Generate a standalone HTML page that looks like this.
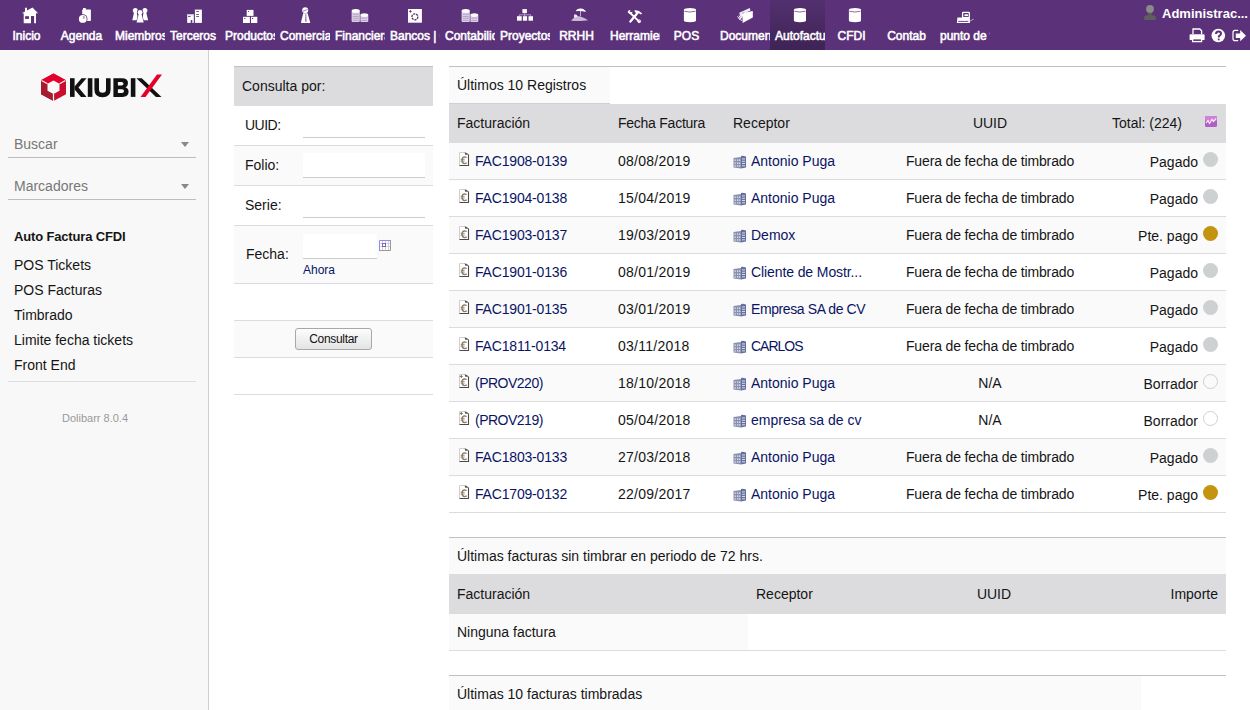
<!DOCTYPE html>
<html><head><meta charset="utf-8"><style>
*{box-sizing:border-box}
html,body{margin:0;padding:0;width:1250px;height:710px;overflow:hidden;background:#fff;font-family:"Liberation Sans",sans-serif;color:#151515}
.abs{position:absolute}
#top{position:absolute;left:0;top:0;width:1250px;height:50px;background:#5b3179}
.tab{position:absolute;top:0;width:55px;height:50px;overflow:hidden}
.tab.act{background:linear-gradient(#53306f,#3e2356)}
.tab svg{position:absolute;left:0;top:0}
.tab span{position:absolute;left:5px;top:29px;width:43px;text-align:center;color:#fff;font-size:12px;white-space:nowrap;line-height:14px;-webkit-text-stroke:0.55px #fff}
#user{position:absolute;left:1144px;top:4px;white-space:nowrap}
#user svg{position:absolute;left:0;top:1px}
#user b{position:absolute;left:18px;top:2px;color:#fff;font-size:13px;font-weight:700}
#side{position:absolute;left:0;top:50px;width:209px;height:660px;background:#f8f8f8;border-right:1px solid #cfcfcf}
.sel{position:absolute;left:8px;width:188px;border-bottom:1px solid #bdbdbd;height:30px}
.sel span{position:absolute;left:6px;font-size:14px;color:#777;line-height:16px}
.sel i{position:absolute;right:7px;width:0;height:0;border-left:4px solid transparent;border-right:4px solid transparent;border-top:5px solid #888}
.menu{position:absolute;left:14px;font-size:14px;color:#151515;white-space:nowrap;line-height:16px}
.t{position:absolute;white-space:nowrap;font-size:14px;line-height:16px}
.hl{position:absolute;height:1px}
a{color:#0a1464;text-decoration:none}

</style></head><body>
<div id="top"><div class="tab" style="left:0px"><svg width="55" height="30" viewBox="0 0 55 30"><path d="M21.7 13.3 L25 11.6 L25 7.8 L27 7.8 L27 10.5 L32.5 7.6 L38.1 13.3 L36 13.3 L36 23.2 L34.1 23.2 L34.1 16.1 L31 16.1 L31 23.2 L23.7 23.2 L23.7 13.3 Z" fill="#fff"/><rect x="25.1" y="16.2" width="3.9" height="2.7" fill="#5b3179"/></svg><span>Inicio</span></div><div class="tab" style="left:55px"><svg width="55" height="30" viewBox="0 0 55 30"><rect x="27.2" y="9.6" width="8.7" height="11.3" rx="0.6" fill="#fff"/><rect x="28" y="8" width="2.8" height="2" fill="#fff"/><circle cx="27.8" cy="18.9" r="4.7" fill="#5b3179"/><circle cx="27.8" cy="18.9" r="3.9" fill="#fff"/><path d="M27.8 18.9 L27.8 15.8 A3.1 3.1 0 0 1 30.6 18 Z" fill="#b8a8c8"/></svg><span>Agenda</span></div><div class="tab" style="left:110px"><svg width="55" height="30" viewBox="0 0 55 30"><circle cx="25.3" cy="10.6" r="2.5" fill="#fff"/><path d="M24.1 12 L26.6 12 L28.2 20.3 L22.3 20.3 Z" fill="#fff"/><circle cx="34.9" cy="10.6" r="2.5" fill="#fff"/><path d="M33.6 12 L36.1 12 L38.1 20.3 L32.1 20.3 Z" fill="#fff"/><circle cx="30.1" cy="12.3" r="3.1" fill="#5b3179"/><path d="M28.2 14.5 L32 14.5 L34.6 23.2 L25.8 23.2 Z" fill="#5b3179"/><circle cx="30.1" cy="12.3" r="2.4" fill="#fff"/><path d="M28.7 14 L31.5 14 L33.7 22.6 L26.6 22.6 Z" fill="#fff"/></svg><span>Miembros</span></div><div class="tab" style="left:165px"><svg width="55" height="30" viewBox="0 0 55 30"><rect x="29.9" y="9.6" width="7" height="13.3" fill="#fff"/><rect x="31.2" y="11.2" width="2.8" height="0.8" fill="#5b3179"/><rect x="31.2" y="14" width="2.8" height="0.8" fill="#5b3179"/><rect x="31.2" y="16" width="2.8" height="0.8" fill="#5b3179"/><rect x="22.2" y="14.1" width="6.6" height="8.8" fill="#fff"/><rect x="22.2" y="14.1" width="6.6" height="1.2" fill="#c9bcd6"/><rect x="23" y="16.1" width="2.7" height="0.8" fill="#5b3179"/><rect x="25.7" y="20.1" width="1.6" height="2.8" fill="#5b3179"/></svg><span>Terceros</span></div><div class="tab" style="left:220px"><svg width="55" height="30" viewBox="0 0 55 30"><rect x="26.7" y="9.9" width="6.8" height="6" fill="#fff"/><rect x="23" y="16.8" width="6.9" height="6.2" fill="#fff"/><rect x="31" y="16.8" width="6.3" height="6.2" fill="#fff"/><circle cx="28.5" cy="11.5" r="0.6" fill="#5b3179"/><circle cx="24.8" cy="18.4" r="0.6" fill="#5b3179"/><circle cx="32.6" cy="18.4" r="0.6" fill="#5b3179"/></svg><span>Productos</span></div><div class="tab" style="left:275px"><svg width="55" height="30" viewBox="0 0 55 30"><circle cx="30.2" cy="10.2" r="3" fill="#fff"/><path d="M28 11.2 L32.5 9.5" stroke="#5b3179" stroke-width="0.6"/><path d="M28.2 13.3 L32.6 13.3 L35.2 22.4 Q35.2 22.9 34.7 22.9 L26.5 22.9 Q26 22.9 26 22.4 Z" fill="#fff"/><path d="M30.6 14 L31.2 14 L31.4 21.8 L30.4 21.8 Z" fill="#5b3179"/></svg><span>Comercial</span></div><div class="tab" style="left:330px"><svg width="55" height="30" viewBox="0 0 55 30"><rect x="21.6" y="10.9" width="8.2" height="11.1" rx="1" fill="#ddd3e6"/><ellipse cx="25.7" cy="10.9" rx="4.1" ry="1.8" fill="#fff"/><path d="M22.6 14.2 H28.8 M22.6 16.4 H28.8 M22.6 18.2 H28.8 M22.6 20.3 H28.8" stroke="#a08cb8" stroke-width="0.7"/><rect x="30.4" y="15.1" width="7.9" height="6.9" rx="1" fill="#ddd3e6"/><ellipse cx="34.35" cy="15.1" rx="3.95" ry="1.8" fill="#fff"/><path d="M31.4 18 H37.3 M31.4 20.4 H37.3" stroke="#a08cb8" stroke-width="0.7"/></svg><span>Financiera</span></div><div class="tab" style="left:385px"><svg width="55" height="30" viewBox="0 0 55 30"><rect x="23" y="9" width="13.9" height="13.7" fill="#fff"/><circle cx="29.9" cy="16.85" r="3" fill="none" stroke="#5b3179" stroke-width="1.3" stroke-dasharray="2.2 0.8"/><path d="M24.2 11.4 H26.6 M25.4 10.2 V12.6" stroke="#5b3179" stroke-width="1"/></svg><span>Bancos | Caja</span></div><div class="tab" style="left:440px"><svg width="55" height="30" viewBox="0 0 55 30"><rect x="21.6" y="10.9" width="8.2" height="11.1" rx="1" fill="#ddd3e6"/><ellipse cx="25.7" cy="10.9" rx="4.1" ry="1.8" fill="#fff"/><path d="M22.6 14.2 H28.8 M22.6 16.4 H28.8 M22.6 18.2 H28.8 M22.6 20.3 H28.8" stroke="#a08cb8" stroke-width="0.7"/><rect x="30.4" y="15.1" width="7.9" height="6.9" rx="1" fill="#ddd3e6"/><ellipse cx="34.35" cy="15.1" rx="3.95" ry="1.8" fill="#fff"/><path d="M31.4 18 H37.3 M31.4 20.4 H37.3" stroke="#a08cb8" stroke-width="0.7"/></svg><span>Contabilidad</span></div><div class="tab" style="left:495px"><svg width="55" height="30" viewBox="0 0 55 30"><rect x="27.4" y="9.1" width="4.5" height="4" fill="#fff"/><rect x="22" y="16.2" width="4.7" height="4.5" fill="#fff"/><rect x="27.9" y="16.2" width="4.2" height="4.5" fill="#fff"/><rect x="33.5" y="16.2" width="4.5" height="4.5" fill="#fff"/><path d="M29.7 13.1 V16.2 M24.3 16.2 V14.8 H35.7 V16.2" stroke="#c0b0d0" stroke-width="0.8" fill="none"/></svg><span>Proyectos</span></div><div class="tab" style="left:550px"><svg width="55" height="30" viewBox="0 0 55 30"><path d="M25.7 11.2 Q27 8.2 30.8 8.5 Q34.6 8.8 36 12 Q32 10.8 25.7 11.2 Z" fill="#fff"/><rect x="30.2" y="11" width="0.8" height="5.4" fill="#d8cce2"/><path d="M21 20.5 Q22.5 18.5 24 18 Q23.5 15.5 24.5 14.6 Q26.5 14.5 27.5 16 Q32 16.5 38.1 20.3 Q33 21.2 28 21 Q24 21 21 20.5 Z" fill="#c9bbd8"/><path d="M24.5 14.6 Q26.5 14.5 27.5 16 Q27 17.5 24.2 17.6 Q23.6 15.5 24.5 14.6 Z" fill="#eee8f3"/></svg><span>RRHH</span></div><div class="tab" style="left:605px"><svg width="55" height="30" viewBox="0 0 55 30"><path d="M25.4 21.6 L32.5 13" stroke="#fff" stroke-width="2.3" stroke-linecap="round"/><path d="M29.1 10.5 Q33 9.3 37.2 13.4 L35.9 14.4 Q33 12.5 31 13.2 Z" fill="#fff"/><path d="M25 12.8 L34.2 21.6" stroke="#fff" stroke-width="1.9" stroke-linecap="round"/><path d="M22.6 12.2 Q22.8 9.8 25.6 9.9 L24.6 11.4 L25.8 12.6 L27.4 11.6 Q27.5 14.2 25 14.3 Z" fill="#fff"/><circle cx="34.2" cy="21.3" r="1.4" fill="none" stroke="#fff" stroke-width="1"/></svg><span>Herramientas</span></div><div class="tab" style="left:660px"><svg width="55" height="30" viewBox="0 0 55 30"><path d="M23.9 9.7 L23.9 20.6 Q23.9 22.3 29.95 22.3 Q36 22.3 36 20.6 L36 9.7 Z" fill="#fff"/><ellipse cx="29.95" cy="9.7" rx="6.05" ry="1.7" fill="#fff"/><path d="M24.3 11.2 Q29.95 12.9 35.6 11.2" stroke="#5b3179" stroke-width="0.7" fill="none"/></svg><span>POS</span></div><div class="tab" style="left:715px"><svg width="55" height="30" viewBox="0 0 55 30"><path d="M24.2 12.7 L34.7 8 L35.5 10.5 L29.5 13.5 L26 19 Z" fill="#fff" opacity="0.9"/><path d="M27.3 13.3 L37.8 11.1 L37.8 17.6 L27.6 22.9 Z" fill="#fff"/><path d="M22.6 16.4 L24.5 19.5 L26 17 M24 15.5 L26.5 21" stroke="#fff" stroke-width="0.9" fill="none"/><path d="M27.3 13.3 L29.3 12.7" stroke="#5b3179" stroke-width="0.5"/></svg><span>Documentos</span></div><div class="tab act" style="left:770px"><svg width="55" height="30" viewBox="0 0 55 30"><path d="M23.9 9.7 L23.9 20.6 Q23.9 22.3 29.95 22.3 Q36 22.3 36 20.6 L36 9.7 Z" fill="#fff"/><ellipse cx="29.95" cy="9.7" rx="6.05" ry="1.7" fill="#fff"/><path d="M24.3 11.2 Q29.95 12.9 35.6 11.2" stroke="#5b3179" stroke-width="0.7" fill="none"/></svg><span>Autofactura</span></div><div class="tab" style="left:825px"><svg width="55" height="30" viewBox="0 0 55 30"><path d="M23.9 9.7 L23.9 20.6 Q23.9 22.3 29.95 22.3 Q36 22.3 36 20.6 L36 9.7 Z" fill="#fff"/><ellipse cx="29.95" cy="9.7" rx="6.05" ry="1.7" fill="#fff"/><path d="M24.3 11.2 Q29.95 12.9 35.6 11.2" stroke="#5b3179" stroke-width="0.7" fill="none"/></svg><span>CFDI</span></div><div class="tab" style="left:880px"><span>Contab</span></div><div class="tab" style="left:935px"><svg width="55" height="30" viewBox="0 0 55 30"><rect x="27.6" y="12.3" width="6.7" height="5.3" rx="0.6" fill="none" stroke="#fff" stroke-width="1.3"/><rect x="29.5" y="14.3" width="3.5" height="1.8" fill="#fff"/><path d="M22.4 17.6 L34.9 17.6 L34.9 22.9 L21.9 22.9 Z" fill="#fff"/><rect x="23.1" y="20.9" width="10.2" height="0.9" fill="#5b3179"/><path d="M35 20.7 Q36 21.4 36.5 20 L38.9 19.2" stroke="#fff" stroke-width="0.5" fill="none"/></svg><span>punto de venta</span></div><div id="user"><svg width="13" height="16" viewBox="0 0 13 16"><rect x="4.3" y="6" width="3.4" height="5" fill="#5e5e5e"/><path d="M0.2 15 V12.3 Q0.4 10.2 3.2 10.2 H8.8 Q11.6 10.2 11.8 12.3 V15 Z" fill="#5e5e5e"/><ellipse cx="6" cy="3.9" rx="3.9" ry="3.9" fill="#8a8c88"/></svg><b>Administrac...</b></div><svg class="abs" style="left:1185px;top:24px" width="65" height="22" viewBox="1185 24 65 22">
<path d="M1193 34 V29 H1199.8 L1201.6 30.8 V34" stroke="#fff" stroke-width="1.3" fill="none"/>
<path d="M1190.5 34.2 H1203.7 Q1204.6 34.2 1204.6 35.2 V39.6 Q1204.6 40 1204.2 40 H1190 Q1189.6 40 1189.6 39.6 V35.2 Q1189.6 34.2 1190.5 34.2 Z" fill="#fff"/>
<path d="M1192.6 39 V41.5 H1201.6 V39" stroke="#fff" stroke-width="1.3" fill="none"/>
<rect x="1193.3" y="39.4" width="7.6" height="1.3" fill="#5b3179"/>
<circle cx="1218.3" cy="35.5" r="6.8" fill="#fff"/>
<path d="M1216 34 Q1216 31.4 1218.5 31.4 Q1221 31.4 1221 33.6 Q1221 35 1219.6 35.7 Q1218.7 36.2 1218.7 37.6" stroke="#5b3179" stroke-width="2" fill="none"/>
<rect x="1217.8" y="38.6" width="1.8" height="1.7" fill="#5b3179"/>
<path d="M1238.2 30.4 H1235 Q1233 30.4 1233 32.6 V38.4 Q1233 40.6 1235 40.6 H1238.2" stroke="#fff" stroke-width="1.2" fill="none"/>
<path d="M1235.8 33.6 H1240.2 V30 L1246 35.8 L1240.2 41.2 V38 H1235.8 Z" fill="#fff"/>
</svg></div>
<div id="side"><svg class="abs" style="left:0;top:0" width="208" height="60" viewBox="0 50 208 60">
<g transform="translate(41,73)">
<path d="M12.5 0.5 L25 7.2 L25 21.3 L12.5 28 L0 21.3 L0 7.2 Z" fill="#c8102e"/>
<path d="M12.5 0.5 L25 7.2 L12.5 14 L0 7.2 Z" fill="#e4002b"/>
<path d="M0 7.2 L12.5 14 L12.5 28 L0 21.3 Z" fill="#a51c30"/>
<path d="M12.5 7.5 L18.5 10.7 L18.5 17.8 L12.5 21 L6.5 17.8 L6.5 10.7 Z" fill="#f8f8f8"/>
<path d="M0.5 7.5 L6.5 10.7 M24.5 7.5 L18.5 10.7 M12.5 21 L12.5 28" stroke="#f8f8f8" stroke-width="1.2"/>
</g>
<g fill="#111">
<rect x="70" y="78.2" width="4.6" height="18.7"/>
<path d="M74.6 86.5 L81.5 78.2 L86.5 78.2 L78.5 87.5 L86.5 96.9 L81 96.9 L74.6 89.5 Z"/>
<rect x="87.8" y="78.2" width="4.6" height="18.7"/>
<path d="M94.4 78.2 H99 V89.5 Q99 92.8 102.5 92.8 Q106 92.8 106 89.5 V78.2 H110.6 V89.5 Q110.6 97.2 102.5 97.2 Q94.4 97.2 94.4 89.5 Z"/>
<path fill-rule="evenodd" d="M113.4 78.2 H122 Q128 78.2 128 83 Q128 86 125.5 87.2 Q128.6 88.4 128.6 91.6 Q128.6 96.9 122.5 96.9 H113.4 Z M117.9 82 V85.6 H121.5 Q123.5 85.6 123.5 83.8 Q123.5 82 121.5 82 Z M117.9 89.2 V93.1 H122 Q124 93.1 124 91.1 Q124 89.2 122 89.2 Z"/>
<rect x="130.8" y="78.2" width="4.6" height="18.7"/>
<path d="M136.4 78.2 H141.8 L161.5 96.9 H156 Z"/>
</g>
<path d="M140.5 96.9 L157 74.6 H162 L145.5 96.9 Z" fill="#e4002b"/>
</svg><div class="sel" style="top:78px"><span style="top:8px">Buscar</span><i style="top:14px"></i></div><div class="sel" style="top:120px"><span style="top:8px">Marcadores</span><i style="top:14px"></i></div><div class="menu" style="top:179px;font-weight:700;font-size:13px;letter-spacing:-0.16px">Auto Factura CFDI</div><div class="menu" style="top:207px;">POS Tickets</div><div class="menu" style="top:232px;">POS Facturas</div><div class="menu" style="top:257px;">Timbrado</div><div class="menu" style="top:282px;">Limite fecha tickets</div><div class="menu" style="top:307px;">Front End</div><div class="hl" style="left:8px;top:331px;width:188px;background:#ddd"></div><div class="abs" style="left:0;top:362px;width:190px;text-align:center;font-size:11px;color:#999">Dolibarr 8.0.4</div></div>
<div class="abs" style="left:234px;top:66px;width:199px;height:1px;background:#c0c0c0;"></div><div class="abs" style="left:234px;top:67px;width:199px;height:39px;background:#dcdcdf;"></div><div class="t" style="left:242px;top:78px;font-size:14px;line-height:16px;">Consulta por:</div><div class="abs" style="left:234px;top:106px;width:199px;height:39px;background:#fff;"></div><div class="abs" style="left:234px;top:145px;width:199px;height:1px;background:#dcdcdf;"></div><div class="abs" style="left:234px;top:146px;width:199px;height:39px;background:#fafafa;"></div><div class="abs" style="left:234px;top:185px;width:199px;height:1px;background:#dcdcdf;"></div><div class="abs" style="left:234px;top:186px;width:199px;height:39px;background:#fff;"></div><div class="abs" style="left:234px;top:225px;width:199px;height:1px;background:#dcdcdf;"></div><div class="abs" style="left:234px;top:226px;width:199px;height:57px;background:#fafafa;"></div><div class="abs" style="left:234px;top:283px;width:199px;height:1px;background:#dcdcdf;"></div><div class="abs" style="left:234px;top:284px;width:199px;height:36px;background:#fff;"></div><div class="abs" style="left:234px;top:320px;width:199px;height:1px;background:#dcdcdf;"></div><div class="abs" style="left:234px;top:321px;width:199px;height:36px;background:#fafafa;"></div><div class="abs" style="left:234px;top:357px;width:199px;height:1px;background:#dcdcdf;"></div><div class="abs" style="left:234px;top:358px;width:199px;height:36px;background:#fff;"></div><div class="abs" style="left:234px;top:394px;width:199px;height:1px;background:#dcdcdf;"></div><div class="t" style="left:245px;top:117px;font-size:14px;line-height:16px;letter-spacing:-0.5px">UUID:</div><div class="t" style="left:245px;top:157px;font-size:14px;line-height:16px;">Folio:</div><div class="t" style="left:245px;top:197px;font-size:14px;line-height:16px;">Serie:</div><div class="t" style="left:246px;top:246px;font-size:14px;line-height:16px;">Fecha:</div><div class="abs" style="left:303px;top:137px;width:122px;height:1px;background:#ccc;"></div><div class="abs" style="left:303px;top:153px;width:122px;height:24px;background:#fff;"></div><div class="abs" style="left:303px;top:177px;width:122px;height:1px;background:#ccc;"></div><div class="abs" style="left:303px;top:217px;width:122px;height:1px;background:#ccc;"></div><div class="abs" style="left:303px;top:234px;width:74px;height:24px;background:#fff;"></div><div class="abs" style="left:303px;top:258px;width:74px;height:1px;background:#ccc;"></div><svg class="abs" style="left:379px;top:240px" width="12" height="11" viewBox="0 0 12 11"><rect x="0" y="0" width="12" height="11" fill="#fff"/><path d="M3.5 1 V10 M6.5 1 V10 M9.5 1 V10 M1 3.5 H11 M1 6.5 H11" stroke="#d0d0d0" stroke-width="1"/><path d="M0.5 11 V0.5 H12" stroke="#8a8ef0" stroke-width="1" fill="none"/><path d="M11.5 1 V10.5 H0.5" stroke="#9a9a9a" stroke-width="1" fill="none"/><rect x="3.5" y="3.5" width="3" height="3" fill="none" stroke="#9060b0" stroke-width="1"/></svg><div class="t" style="left:303px;top:263px;font-size:12px;line-height:14px;"><a>Ahora</a></div><div class="abs" style="left:295px;top:328px;width:77px;height:22px;border:1px solid #a8a8a8;border-radius:3px;background:linear-gradient(#fdfdfd,#e4e4e4);font-size:12px;line-height:20px;text-align:center;color:#111;letter-spacing:-0.3px">Consultar</div><div class="abs" style="left:449px;top:66px;width:777px;height:1px;background:#c0c0c0;"></div><div class="abs" style="left:449px;top:67px;width:161px;height:36px;background:#fafafa;"></div><div class="t" style="left:457px;top:77px;font-size:14px;line-height:16px;">Últimos 10 Registros</div><div class="abs" style="left:449px;top:104px;width:777px;height:39px;background:#dcdcdf;"></div><div class="abs" style="left:449px;top:103px;width:161px;height:1px;background:#d0d0d2;"></div><div class="t" style="left:457px;top:115px;font-size:14px;line-height:16px;">Facturación</div><div class="t" style="left:618px;top:115px;font-size:14px;line-height:16px;letter-spacing:-0.25px">Fecha Factura</div><div class="t" style="left:733px;top:115px;font-size:14px;line-height:16px;">Receptor</div><div class="t" style="left:790px;width:400px;top:115px;font-size:14px;line-height:16px;text-align:center;">UUID</div><div class="t" style="left:1112px;top:115px;font-size:14px;line-height:16px;">Total: (224)</div><svg class="abs" style="left:1205px;top:116px" width="12" height="11" viewBox="0 0 12 11"><rect x="0" y="0" width="12" height="11" rx="1.5" fill="#b060c0"/><rect x="0" y="0" width="12" height="5" rx="1.5" fill="#d080d8"/><path d="M1 7 L3 4.5 L4.5 7.5 L7 3.5 L8.5 5.5 L11 2.5" stroke="#fff" stroke-width="1.1" fill="none"/></svg><div class="abs" style="left:449px;top:143px;width:777px;height:36px;background:#fafafa;"></div><div class="abs" style="left:449px;top:179px;width:777px;height:1px;background:#dcdcdf;"></div><svg class="abs" style="left:459px;top:152px" width="11" height="14" viewBox="0 0 11 14"><path d="M0.5 0.5 H5.5 L9.5 3 V13.5 H0.5 Z" fill="#fff"/><path d="M0.5 13.5 V0.5 H5" stroke="#cfcfcf" stroke-width="1" fill="none"/><path d="M9.5 2.5 V13.5 H0.5" stroke="#4a4a4a" stroke-width="1.1" fill="none"/><path d="M5.2 0.3 Q6.3 1.5 6.2 2.8 Q7.8 3 9.6 2.6 Q8.3 0.9 6.5 0.4 Z" fill="#555"/><path d="M7.6 5.6 Q6.8 4.8 5.6 4.8 Q3.1 4.9 3 8.2 Q3.1 11.5 5.6 11.6 Q6.9 11.6 7.7 10.7" stroke="#8a7c66" stroke-width="1.3" fill="none"/><path d="M1.7 7.3 H5.6 M1.7 9.1 H5.6" stroke="#8a7c66" stroke-width="0.9"/></svg><div class="t" style="left:475px;top:153px;font-size:14px;line-height:16px;letter-spacing:-0.18px"><a>FAC1908-0139</a></div><div class="t" style="left:618px;top:153px;font-size:14px;line-height:16px;letter-spacing:0.25px">08/08/2019</div><svg class="abs" style="left:733px;top:155px" width="14" height="14" viewBox="0 0 14 14"><path d="M0.5 3 L8 2 L8 13.5 L0.5 12.5 Z" fill="#8890b0"/><path d="M8 1 Q9.5 0.3 13 1.5 V12.5 L8 13.5 Z" fill="#6670a0"/><g fill="#e8e8f0"><rect x="1.5" y="4.5" width="1.3" height="1.3"/><rect x="4" y="4.5" width="1.3" height="1.3"/><rect x="6" y="4.5" width="1.3" height="1.3"/><rect x="1.5" y="7.5" width="1.3" height="1.3"/><rect x="4" y="7.5" width="1.3" height="1.3"/><rect x="6" y="7.5" width="1.3" height="1.3"/><rect x="1.5" y="10.3" width="1.3" height="1.3"/><rect x="4" y="10.3" width="1.3" height="1.3"/><rect x="6" y="10.3" width="1.3" height="1.3"/><rect x="9" y="3.5" width="3" height="0.9"/><rect x="9" y="5.8" width="3" height="0.9"/><rect x="9" y="8.1" width="3" height="0.9"/><rect x="9" y="10.4" width="3" height="0.9"/></g></svg><div class="t" style="left:751px;top:153px;font-size:14px;line-height:16px;"><a>Antonio Puga</a></div><div class="t" style="left:790px;width:400px;top:153px;font-size:14px;line-height:16px;text-align:center;letter-spacing:-0.15px">Fuera de fecha de timbrado</div><div class="t" style="right:52px;top:154px;font-size:14px;line-height:16px;text-align:right;">Pagado</div><div class="abs" style="left:1202.5px;top:151.5px;width:15px;height:15px;border-radius:50%;background:#cdd1d1"></div><div class="abs" style="left:449px;top:180px;width:777px;height:36px;background:#fff;"></div><div class="abs" style="left:449px;top:216px;width:777px;height:1px;background:#dcdcdf;"></div><svg class="abs" style="left:459px;top:189px" width="11" height="14" viewBox="0 0 11 14"><path d="M0.5 0.5 H5.5 L9.5 3 V13.5 H0.5 Z" fill="#fff"/><path d="M0.5 13.5 V0.5 H5" stroke="#cfcfcf" stroke-width="1" fill="none"/><path d="M9.5 2.5 V13.5 H0.5" stroke="#4a4a4a" stroke-width="1.1" fill="none"/><path d="M5.2 0.3 Q6.3 1.5 6.2 2.8 Q7.8 3 9.6 2.6 Q8.3 0.9 6.5 0.4 Z" fill="#555"/><path d="M7.6 5.6 Q6.8 4.8 5.6 4.8 Q3.1 4.9 3 8.2 Q3.1 11.5 5.6 11.6 Q6.9 11.6 7.7 10.7" stroke="#8a7c66" stroke-width="1.3" fill="none"/><path d="M1.7 7.3 H5.6 M1.7 9.1 H5.6" stroke="#8a7c66" stroke-width="0.9"/></svg><div class="t" style="left:475px;top:190px;font-size:14px;line-height:16px;letter-spacing:-0.18px"><a>FAC1904-0138</a></div><div class="t" style="left:618px;top:190px;font-size:14px;line-height:16px;letter-spacing:0.25px">15/04/2019</div><svg class="abs" style="left:733px;top:192px" width="14" height="14" viewBox="0 0 14 14"><path d="M0.5 3 L8 2 L8 13.5 L0.5 12.5 Z" fill="#8890b0"/><path d="M8 1 Q9.5 0.3 13 1.5 V12.5 L8 13.5 Z" fill="#6670a0"/><g fill="#e8e8f0"><rect x="1.5" y="4.5" width="1.3" height="1.3"/><rect x="4" y="4.5" width="1.3" height="1.3"/><rect x="6" y="4.5" width="1.3" height="1.3"/><rect x="1.5" y="7.5" width="1.3" height="1.3"/><rect x="4" y="7.5" width="1.3" height="1.3"/><rect x="6" y="7.5" width="1.3" height="1.3"/><rect x="1.5" y="10.3" width="1.3" height="1.3"/><rect x="4" y="10.3" width="1.3" height="1.3"/><rect x="6" y="10.3" width="1.3" height="1.3"/><rect x="9" y="3.5" width="3" height="0.9"/><rect x="9" y="5.8" width="3" height="0.9"/><rect x="9" y="8.1" width="3" height="0.9"/><rect x="9" y="10.4" width="3" height="0.9"/></g></svg><div class="t" style="left:751px;top:190px;font-size:14px;line-height:16px;"><a>Antonio Puga</a></div><div class="t" style="left:790px;width:400px;top:190px;font-size:14px;line-height:16px;text-align:center;letter-spacing:-0.15px">Fuera de fecha de timbrado</div><div class="t" style="right:52px;top:191px;font-size:14px;line-height:16px;text-align:right;">Pagado</div><div class="abs" style="left:1202.5px;top:188.5px;width:15px;height:15px;border-radius:50%;background:#cdd1d1"></div><div class="abs" style="left:449px;top:217px;width:777px;height:36px;background:#fafafa;"></div><div class="abs" style="left:449px;top:253px;width:777px;height:1px;background:#dcdcdf;"></div><svg class="abs" style="left:459px;top:226px" width="11" height="14" viewBox="0 0 11 14"><path d="M0.5 0.5 H5.5 L9.5 3 V13.5 H0.5 Z" fill="#fff"/><path d="M0.5 13.5 V0.5 H5" stroke="#cfcfcf" stroke-width="1" fill="none"/><path d="M9.5 2.5 V13.5 H0.5" stroke="#4a4a4a" stroke-width="1.1" fill="none"/><path d="M5.2 0.3 Q6.3 1.5 6.2 2.8 Q7.8 3 9.6 2.6 Q8.3 0.9 6.5 0.4 Z" fill="#555"/><path d="M7.6 5.6 Q6.8 4.8 5.6 4.8 Q3.1 4.9 3 8.2 Q3.1 11.5 5.6 11.6 Q6.9 11.6 7.7 10.7" stroke="#8a7c66" stroke-width="1.3" fill="none"/><path d="M1.7 7.3 H5.6 M1.7 9.1 H5.6" stroke="#8a7c66" stroke-width="0.9"/></svg><div class="t" style="left:475px;top:227px;font-size:14px;line-height:16px;letter-spacing:-0.18px"><a>FAC1903-0137</a></div><div class="t" style="left:618px;top:227px;font-size:14px;line-height:16px;letter-spacing:0.25px">19/03/2019</div><svg class="abs" style="left:733px;top:229px" width="14" height="14" viewBox="0 0 14 14"><path d="M0.5 3 L8 2 L8 13.5 L0.5 12.5 Z" fill="#8890b0"/><path d="M8 1 Q9.5 0.3 13 1.5 V12.5 L8 13.5 Z" fill="#6670a0"/><g fill="#e8e8f0"><rect x="1.5" y="4.5" width="1.3" height="1.3"/><rect x="4" y="4.5" width="1.3" height="1.3"/><rect x="6" y="4.5" width="1.3" height="1.3"/><rect x="1.5" y="7.5" width="1.3" height="1.3"/><rect x="4" y="7.5" width="1.3" height="1.3"/><rect x="6" y="7.5" width="1.3" height="1.3"/><rect x="1.5" y="10.3" width="1.3" height="1.3"/><rect x="4" y="10.3" width="1.3" height="1.3"/><rect x="6" y="10.3" width="1.3" height="1.3"/><rect x="9" y="3.5" width="3" height="0.9"/><rect x="9" y="5.8" width="3" height="0.9"/><rect x="9" y="8.1" width="3" height="0.9"/><rect x="9" y="10.4" width="3" height="0.9"/></g></svg><div class="t" style="left:751px;top:227px;font-size:14px;line-height:16px;"><a>Demox</a></div><div class="t" style="left:790px;width:400px;top:227px;font-size:14px;line-height:16px;text-align:center;letter-spacing:-0.15px">Fuera de fecha de timbrado</div><div class="t" style="right:52px;top:228px;font-size:14px;line-height:16px;text-align:right;">Pte. pago</div><div class="abs" style="left:1202.5px;top:225.5px;width:15px;height:15px;border-radius:50%;background:#c49410"></div><div class="abs" style="left:449px;top:254px;width:777px;height:36px;background:#fff;"></div><div class="abs" style="left:449px;top:290px;width:777px;height:1px;background:#dcdcdf;"></div><svg class="abs" style="left:459px;top:263px" width="11" height="14" viewBox="0 0 11 14"><path d="M0.5 0.5 H5.5 L9.5 3 V13.5 H0.5 Z" fill="#fff"/><path d="M0.5 13.5 V0.5 H5" stroke="#cfcfcf" stroke-width="1" fill="none"/><path d="M9.5 2.5 V13.5 H0.5" stroke="#4a4a4a" stroke-width="1.1" fill="none"/><path d="M5.2 0.3 Q6.3 1.5 6.2 2.8 Q7.8 3 9.6 2.6 Q8.3 0.9 6.5 0.4 Z" fill="#555"/><path d="M7.6 5.6 Q6.8 4.8 5.6 4.8 Q3.1 4.9 3 8.2 Q3.1 11.5 5.6 11.6 Q6.9 11.6 7.7 10.7" stroke="#8a7c66" stroke-width="1.3" fill="none"/><path d="M1.7 7.3 H5.6 M1.7 9.1 H5.6" stroke="#8a7c66" stroke-width="0.9"/></svg><div class="t" style="left:475px;top:264px;font-size:14px;line-height:16px;letter-spacing:-0.18px"><a>FAC1901-0136</a></div><div class="t" style="left:618px;top:264px;font-size:14px;line-height:16px;letter-spacing:0.25px">08/01/2019</div><svg class="abs" style="left:733px;top:266px" width="14" height="14" viewBox="0 0 14 14"><path d="M0.5 3 L8 2 L8 13.5 L0.5 12.5 Z" fill="#8890b0"/><path d="M8 1 Q9.5 0.3 13 1.5 V12.5 L8 13.5 Z" fill="#6670a0"/><g fill="#e8e8f0"><rect x="1.5" y="4.5" width="1.3" height="1.3"/><rect x="4" y="4.5" width="1.3" height="1.3"/><rect x="6" y="4.5" width="1.3" height="1.3"/><rect x="1.5" y="7.5" width="1.3" height="1.3"/><rect x="4" y="7.5" width="1.3" height="1.3"/><rect x="6" y="7.5" width="1.3" height="1.3"/><rect x="1.5" y="10.3" width="1.3" height="1.3"/><rect x="4" y="10.3" width="1.3" height="1.3"/><rect x="6" y="10.3" width="1.3" height="1.3"/><rect x="9" y="3.5" width="3" height="0.9"/><rect x="9" y="5.8" width="3" height="0.9"/><rect x="9" y="8.1" width="3" height="0.9"/><rect x="9" y="10.4" width="3" height="0.9"/></g></svg><div class="t" style="left:751px;top:264px;font-size:14px;line-height:16px;letter-spacing:-0.1px"><a>Cliente de Mostr...</a></div><div class="t" style="left:790px;width:400px;top:264px;font-size:14px;line-height:16px;text-align:center;letter-spacing:-0.15px">Fuera de fecha de timbrado</div><div class="t" style="right:52px;top:265px;font-size:14px;line-height:16px;text-align:right;">Pagado</div><div class="abs" style="left:1202.5px;top:262.5px;width:15px;height:15px;border-radius:50%;background:#cdd1d1"></div><div class="abs" style="left:449px;top:291px;width:777px;height:36px;background:#fafafa;"></div><div class="abs" style="left:449px;top:327px;width:777px;height:1px;background:#dcdcdf;"></div><svg class="abs" style="left:459px;top:300px" width="11" height="14" viewBox="0 0 11 14"><path d="M0.5 0.5 H5.5 L9.5 3 V13.5 H0.5 Z" fill="#fff"/><path d="M0.5 13.5 V0.5 H5" stroke="#cfcfcf" stroke-width="1" fill="none"/><path d="M9.5 2.5 V13.5 H0.5" stroke="#4a4a4a" stroke-width="1.1" fill="none"/><path d="M5.2 0.3 Q6.3 1.5 6.2 2.8 Q7.8 3 9.6 2.6 Q8.3 0.9 6.5 0.4 Z" fill="#555"/><path d="M7.6 5.6 Q6.8 4.8 5.6 4.8 Q3.1 4.9 3 8.2 Q3.1 11.5 5.6 11.6 Q6.9 11.6 7.7 10.7" stroke="#8a7c66" stroke-width="1.3" fill="none"/><path d="M1.7 7.3 H5.6 M1.7 9.1 H5.6" stroke="#8a7c66" stroke-width="0.9"/></svg><div class="t" style="left:475px;top:301px;font-size:14px;line-height:16px;letter-spacing:-0.18px"><a>FAC1901-0135</a></div><div class="t" style="left:618px;top:301px;font-size:14px;line-height:16px;letter-spacing:0.25px">03/01/2019</div><svg class="abs" style="left:733px;top:303px" width="14" height="14" viewBox="0 0 14 14"><path d="M0.5 3 L8 2 L8 13.5 L0.5 12.5 Z" fill="#8890b0"/><path d="M8 1 Q9.5 0.3 13 1.5 V12.5 L8 13.5 Z" fill="#6670a0"/><g fill="#e8e8f0"><rect x="1.5" y="4.5" width="1.3" height="1.3"/><rect x="4" y="4.5" width="1.3" height="1.3"/><rect x="6" y="4.5" width="1.3" height="1.3"/><rect x="1.5" y="7.5" width="1.3" height="1.3"/><rect x="4" y="7.5" width="1.3" height="1.3"/><rect x="6" y="7.5" width="1.3" height="1.3"/><rect x="1.5" y="10.3" width="1.3" height="1.3"/><rect x="4" y="10.3" width="1.3" height="1.3"/><rect x="6" y="10.3" width="1.3" height="1.3"/><rect x="9" y="3.5" width="3" height="0.9"/><rect x="9" y="5.8" width="3" height="0.9"/><rect x="9" y="8.1" width="3" height="0.9"/><rect x="9" y="10.4" width="3" height="0.9"/></g></svg><div class="t" style="left:751px;top:301px;font-size:14px;line-height:16px;letter-spacing:-0.4px"><a>Empresa SA de CV</a></div><div class="t" style="left:790px;width:400px;top:301px;font-size:14px;line-height:16px;text-align:center;letter-spacing:-0.15px">Fuera de fecha de timbrado</div><div class="t" style="right:52px;top:302px;font-size:14px;line-height:16px;text-align:right;">Pagado</div><div class="abs" style="left:1202.5px;top:299.5px;width:15px;height:15px;border-radius:50%;background:#cdd1d1"></div><div class="abs" style="left:449px;top:328px;width:777px;height:36px;background:#fff;"></div><div class="abs" style="left:449px;top:364px;width:777px;height:1px;background:#dcdcdf;"></div><svg class="abs" style="left:459px;top:337px" width="11" height="14" viewBox="0 0 11 14"><path d="M0.5 0.5 H5.5 L9.5 3 V13.5 H0.5 Z" fill="#fff"/><path d="M0.5 13.5 V0.5 H5" stroke="#cfcfcf" stroke-width="1" fill="none"/><path d="M9.5 2.5 V13.5 H0.5" stroke="#4a4a4a" stroke-width="1.1" fill="none"/><path d="M5.2 0.3 Q6.3 1.5 6.2 2.8 Q7.8 3 9.6 2.6 Q8.3 0.9 6.5 0.4 Z" fill="#555"/><path d="M7.6 5.6 Q6.8 4.8 5.6 4.8 Q3.1 4.9 3 8.2 Q3.1 11.5 5.6 11.6 Q6.9 11.6 7.7 10.7" stroke="#8a7c66" stroke-width="1.3" fill="none"/><path d="M1.7 7.3 H5.6 M1.7 9.1 H5.6" stroke="#8a7c66" stroke-width="0.9"/></svg><div class="t" style="left:475px;top:338px;font-size:14px;line-height:16px;letter-spacing:-0.18px"><a>FAC1811-0134</a></div><div class="t" style="left:618px;top:338px;font-size:14px;line-height:16px;letter-spacing:0.25px">03/11/2018</div><svg class="abs" style="left:733px;top:340px" width="14" height="14" viewBox="0 0 14 14"><path d="M0.5 3 L8 2 L8 13.5 L0.5 12.5 Z" fill="#8890b0"/><path d="M8 1 Q9.5 0.3 13 1.5 V12.5 L8 13.5 Z" fill="#6670a0"/><g fill="#e8e8f0"><rect x="1.5" y="4.5" width="1.3" height="1.3"/><rect x="4" y="4.5" width="1.3" height="1.3"/><rect x="6" y="4.5" width="1.3" height="1.3"/><rect x="1.5" y="7.5" width="1.3" height="1.3"/><rect x="4" y="7.5" width="1.3" height="1.3"/><rect x="6" y="7.5" width="1.3" height="1.3"/><rect x="1.5" y="10.3" width="1.3" height="1.3"/><rect x="4" y="10.3" width="1.3" height="1.3"/><rect x="6" y="10.3" width="1.3" height="1.3"/><rect x="9" y="3.5" width="3" height="0.9"/><rect x="9" y="5.8" width="3" height="0.9"/><rect x="9" y="8.1" width="3" height="0.9"/><rect x="9" y="10.4" width="3" height="0.9"/></g></svg><div class="t" style="left:751px;top:338px;font-size:14px;line-height:16px;letter-spacing:-1px"><a>CARLOS</a></div><div class="t" style="left:790px;width:400px;top:338px;font-size:14px;line-height:16px;text-align:center;letter-spacing:-0.15px">Fuera de fecha de timbrado</div><div class="t" style="right:52px;top:339px;font-size:14px;line-height:16px;text-align:right;">Pagado</div><div class="abs" style="left:1202.5px;top:336.5px;width:15px;height:15px;border-radius:50%;background:#cdd1d1"></div><div class="abs" style="left:449px;top:365px;width:777px;height:36px;background:#fafafa;"></div><div class="abs" style="left:449px;top:401px;width:777px;height:1px;background:#dcdcdf;"></div><svg class="abs" style="left:459px;top:374px" width="11" height="14" viewBox="0 0 11 14"><path d="M0.5 0.5 H5.5 L9.5 3 V13.5 H0.5 Z" fill="#fff"/><path d="M0.5 13.5 V0.5 H5" stroke="#cfcfcf" stroke-width="1" fill="none"/><path d="M9.5 2.5 V13.5 H0.5" stroke="#4a4a4a" stroke-width="1.1" fill="none"/><path d="M5.2 0.3 Q6.3 1.5 6.2 2.8 Q7.8 3 9.6 2.6 Q8.3 0.9 6.5 0.4 Z" fill="#555"/><path d="M7.6 5.6 Q6.8 4.8 5.6 4.8 Q3.1 4.9 3 8.2 Q3.1 11.5 5.6 11.6 Q6.9 11.6 7.7 10.7" stroke="#8a7c66" stroke-width="1.3" fill="none"/><path d="M1.7 7.3 H5.6 M1.7 9.1 H5.6" stroke="#8a7c66" stroke-width="0.9"/><path d="M2.3 1 V4 M0.8 2.5 H3.8" stroke="#857760" stroke-width="1.1"/></svg><div class="t" style="left:475px;top:375px;font-size:14px;line-height:16px;letter-spacing:-0.5px"><a>(PROV220)</a></div><div class="t" style="left:618px;top:375px;font-size:14px;line-height:16px;letter-spacing:0.25px">18/10/2018</div><svg class="abs" style="left:733px;top:377px" width="14" height="14" viewBox="0 0 14 14"><path d="M0.5 3 L8 2 L8 13.5 L0.5 12.5 Z" fill="#8890b0"/><path d="M8 1 Q9.5 0.3 13 1.5 V12.5 L8 13.5 Z" fill="#6670a0"/><g fill="#e8e8f0"><rect x="1.5" y="4.5" width="1.3" height="1.3"/><rect x="4" y="4.5" width="1.3" height="1.3"/><rect x="6" y="4.5" width="1.3" height="1.3"/><rect x="1.5" y="7.5" width="1.3" height="1.3"/><rect x="4" y="7.5" width="1.3" height="1.3"/><rect x="6" y="7.5" width="1.3" height="1.3"/><rect x="1.5" y="10.3" width="1.3" height="1.3"/><rect x="4" y="10.3" width="1.3" height="1.3"/><rect x="6" y="10.3" width="1.3" height="1.3"/><rect x="9" y="3.5" width="3" height="0.9"/><rect x="9" y="5.8" width="3" height="0.9"/><rect x="9" y="8.1" width="3" height="0.9"/><rect x="9" y="10.4" width="3" height="0.9"/></g></svg><div class="t" style="left:751px;top:375px;font-size:14px;line-height:16px;"><a>Antonio Puga</a></div><div class="t" style="left:790px;width:400px;top:375px;font-size:14px;line-height:16px;text-align:center;">N/A</div><div class="t" style="right:52px;top:376px;font-size:14px;line-height:16px;text-align:right;">Borrador</div><div class="abs" style="left:1202.5px;top:373.5px;width:15px;height:15px;border-radius:50%;border:1.3px solid #cdd1d1"></div><div class="abs" style="left:449px;top:402px;width:777px;height:36px;background:#fff;"></div><div class="abs" style="left:449px;top:438px;width:777px;height:1px;background:#dcdcdf;"></div><svg class="abs" style="left:459px;top:411px" width="11" height="14" viewBox="0 0 11 14"><path d="M0.5 0.5 H5.5 L9.5 3 V13.5 H0.5 Z" fill="#fff"/><path d="M0.5 13.5 V0.5 H5" stroke="#cfcfcf" stroke-width="1" fill="none"/><path d="M9.5 2.5 V13.5 H0.5" stroke="#4a4a4a" stroke-width="1.1" fill="none"/><path d="M5.2 0.3 Q6.3 1.5 6.2 2.8 Q7.8 3 9.6 2.6 Q8.3 0.9 6.5 0.4 Z" fill="#555"/><path d="M7.6 5.6 Q6.8 4.8 5.6 4.8 Q3.1 4.9 3 8.2 Q3.1 11.5 5.6 11.6 Q6.9 11.6 7.7 10.7" stroke="#8a7c66" stroke-width="1.3" fill="none"/><path d="M1.7 7.3 H5.6 M1.7 9.1 H5.6" stroke="#8a7c66" stroke-width="0.9"/><path d="M2.3 1 V4 M0.8 2.5 H3.8" stroke="#857760" stroke-width="1.1"/></svg><div class="t" style="left:475px;top:412px;font-size:14px;line-height:16px;letter-spacing:-0.5px"><a>(PROV219)</a></div><div class="t" style="left:618px;top:412px;font-size:14px;line-height:16px;letter-spacing:0.25px">05/04/2018</div><svg class="abs" style="left:733px;top:414px" width="14" height="14" viewBox="0 0 14 14"><path d="M0.5 3 L8 2 L8 13.5 L0.5 12.5 Z" fill="#8890b0"/><path d="M8 1 Q9.5 0.3 13 1.5 V12.5 L8 13.5 Z" fill="#6670a0"/><g fill="#e8e8f0"><rect x="1.5" y="4.5" width="1.3" height="1.3"/><rect x="4" y="4.5" width="1.3" height="1.3"/><rect x="6" y="4.5" width="1.3" height="1.3"/><rect x="1.5" y="7.5" width="1.3" height="1.3"/><rect x="4" y="7.5" width="1.3" height="1.3"/><rect x="6" y="7.5" width="1.3" height="1.3"/><rect x="1.5" y="10.3" width="1.3" height="1.3"/><rect x="4" y="10.3" width="1.3" height="1.3"/><rect x="6" y="10.3" width="1.3" height="1.3"/><rect x="9" y="3.5" width="3" height="0.9"/><rect x="9" y="5.8" width="3" height="0.9"/><rect x="9" y="8.1" width="3" height="0.9"/><rect x="9" y="10.4" width="3" height="0.9"/></g></svg><div class="t" style="left:751px;top:412px;font-size:14px;line-height:16px;"><a>empresa sa de cv</a></div><div class="t" style="left:790px;width:400px;top:412px;font-size:14px;line-height:16px;text-align:center;">N/A</div><div class="t" style="right:52px;top:413px;font-size:14px;line-height:16px;text-align:right;">Borrador</div><div class="abs" style="left:1202.5px;top:410.5px;width:15px;height:15px;border-radius:50%;border:1.3px solid #cdd1d1"></div><div class="abs" style="left:449px;top:439px;width:777px;height:36px;background:#fafafa;"></div><div class="abs" style="left:449px;top:475px;width:777px;height:1px;background:#dcdcdf;"></div><svg class="abs" style="left:459px;top:448px" width="11" height="14" viewBox="0 0 11 14"><path d="M0.5 0.5 H5.5 L9.5 3 V13.5 H0.5 Z" fill="#fff"/><path d="M0.5 13.5 V0.5 H5" stroke="#cfcfcf" stroke-width="1" fill="none"/><path d="M9.5 2.5 V13.5 H0.5" stroke="#4a4a4a" stroke-width="1.1" fill="none"/><path d="M5.2 0.3 Q6.3 1.5 6.2 2.8 Q7.8 3 9.6 2.6 Q8.3 0.9 6.5 0.4 Z" fill="#555"/><path d="M7.6 5.6 Q6.8 4.8 5.6 4.8 Q3.1 4.9 3 8.2 Q3.1 11.5 5.6 11.6 Q6.9 11.6 7.7 10.7" stroke="#8a7c66" stroke-width="1.3" fill="none"/><path d="M1.7 7.3 H5.6 M1.7 9.1 H5.6" stroke="#8a7c66" stroke-width="0.9"/></svg><div class="t" style="left:475px;top:449px;font-size:14px;line-height:16px;letter-spacing:-0.18px"><a>FAC1803-0133</a></div><div class="t" style="left:618px;top:449px;font-size:14px;line-height:16px;letter-spacing:0.25px">27/03/2018</div><svg class="abs" style="left:733px;top:451px" width="14" height="14" viewBox="0 0 14 14"><path d="M0.5 3 L8 2 L8 13.5 L0.5 12.5 Z" fill="#8890b0"/><path d="M8 1 Q9.5 0.3 13 1.5 V12.5 L8 13.5 Z" fill="#6670a0"/><g fill="#e8e8f0"><rect x="1.5" y="4.5" width="1.3" height="1.3"/><rect x="4" y="4.5" width="1.3" height="1.3"/><rect x="6" y="4.5" width="1.3" height="1.3"/><rect x="1.5" y="7.5" width="1.3" height="1.3"/><rect x="4" y="7.5" width="1.3" height="1.3"/><rect x="6" y="7.5" width="1.3" height="1.3"/><rect x="1.5" y="10.3" width="1.3" height="1.3"/><rect x="4" y="10.3" width="1.3" height="1.3"/><rect x="6" y="10.3" width="1.3" height="1.3"/><rect x="9" y="3.5" width="3" height="0.9"/><rect x="9" y="5.8" width="3" height="0.9"/><rect x="9" y="8.1" width="3" height="0.9"/><rect x="9" y="10.4" width="3" height="0.9"/></g></svg><div class="t" style="left:751px;top:449px;font-size:14px;line-height:16px;"><a>Antonio Puga</a></div><div class="t" style="left:790px;width:400px;top:449px;font-size:14px;line-height:16px;text-align:center;letter-spacing:-0.15px">Fuera de fecha de timbrado</div><div class="t" style="right:52px;top:450px;font-size:14px;line-height:16px;text-align:right;">Pagado</div><div class="abs" style="left:1202.5px;top:447.5px;width:15px;height:15px;border-radius:50%;background:#cdd1d1"></div><div class="abs" style="left:449px;top:476px;width:777px;height:36px;background:#fff;"></div><div class="abs" style="left:449px;top:512px;width:777px;height:1px;background:#dcdcdf;"></div><svg class="abs" style="left:459px;top:485px" width="11" height="14" viewBox="0 0 11 14"><path d="M0.5 0.5 H5.5 L9.5 3 V13.5 H0.5 Z" fill="#fff"/><path d="M0.5 13.5 V0.5 H5" stroke="#cfcfcf" stroke-width="1" fill="none"/><path d="M9.5 2.5 V13.5 H0.5" stroke="#4a4a4a" stroke-width="1.1" fill="none"/><path d="M5.2 0.3 Q6.3 1.5 6.2 2.8 Q7.8 3 9.6 2.6 Q8.3 0.9 6.5 0.4 Z" fill="#555"/><path d="M7.6 5.6 Q6.8 4.8 5.6 4.8 Q3.1 4.9 3 8.2 Q3.1 11.5 5.6 11.6 Q6.9 11.6 7.7 10.7" stroke="#8a7c66" stroke-width="1.3" fill="none"/><path d="M1.7 7.3 H5.6 M1.7 9.1 H5.6" stroke="#8a7c66" stroke-width="0.9"/></svg><div class="t" style="left:475px;top:486px;font-size:14px;line-height:16px;letter-spacing:-0.18px"><a>FAC1709-0132</a></div><div class="t" style="left:618px;top:486px;font-size:14px;line-height:16px;letter-spacing:0.25px">22/09/2017</div><svg class="abs" style="left:733px;top:488px" width="14" height="14" viewBox="0 0 14 14"><path d="M0.5 3 L8 2 L8 13.5 L0.5 12.5 Z" fill="#8890b0"/><path d="M8 1 Q9.5 0.3 13 1.5 V12.5 L8 13.5 Z" fill="#6670a0"/><g fill="#e8e8f0"><rect x="1.5" y="4.5" width="1.3" height="1.3"/><rect x="4" y="4.5" width="1.3" height="1.3"/><rect x="6" y="4.5" width="1.3" height="1.3"/><rect x="1.5" y="7.5" width="1.3" height="1.3"/><rect x="4" y="7.5" width="1.3" height="1.3"/><rect x="6" y="7.5" width="1.3" height="1.3"/><rect x="1.5" y="10.3" width="1.3" height="1.3"/><rect x="4" y="10.3" width="1.3" height="1.3"/><rect x="6" y="10.3" width="1.3" height="1.3"/><rect x="9" y="3.5" width="3" height="0.9"/><rect x="9" y="5.8" width="3" height="0.9"/><rect x="9" y="8.1" width="3" height="0.9"/><rect x="9" y="10.4" width="3" height="0.9"/></g></svg><div class="t" style="left:751px;top:486px;font-size:14px;line-height:16px;"><a>Antonio Puga</a></div><div class="t" style="left:790px;width:400px;top:486px;font-size:14px;line-height:16px;text-align:center;letter-spacing:-0.15px">Fuera de fecha de timbrado</div><div class="t" style="right:52px;top:487px;font-size:14px;line-height:16px;text-align:right;">Pte. pago</div><div class="abs" style="left:1202.5px;top:484.5px;width:15px;height:15px;border-radius:50%;background:#c49410"></div><div class="abs" style="left:449px;top:537px;width:777px;height:1px;background:#c0c0c0;"></div><div class="abs" style="left:449px;top:538px;width:777px;height:36px;background:#fafafa;"></div><div class="t" style="left:457px;top:548px;font-size:14px;line-height:16px;">Últimas facturas sin timbrar en periodo de 72 hrs.</div><div class="abs" style="left:449px;top:574px;width:777px;height:40px;background:#dcdcdf;"></div><div class="t" style="left:457px;top:586px;font-size:14px;line-height:16px;">Facturación</div><div class="t" style="left:756px;top:586px;font-size:14px;line-height:16px;">Receptor</div><div class="t" style="left:794px;width:400px;top:586px;font-size:14px;line-height:16px;text-align:center;">UUID</div><div class="t" style="right:32px;top:586px;font-size:14px;line-height:16px;text-align:right;">Importe</div><div class="abs" style="left:449px;top:614px;width:299px;height:36px;background:#fafafa;"></div><div class="t" style="left:457px;top:624px;font-size:14px;line-height:16px;">Ninguna factura</div><div class="abs" style="left:449px;top:650px;width:777px;height:1px;background:#dcdcdf;"></div><div class="abs" style="left:449px;top:675px;width:777px;height:1px;background:#c0c0c0;"></div><div class="abs" style="left:449px;top:676px;width:692px;height:34px;background:#fafafa;"></div><div class="t" style="left:457px;top:686px;font-size:14px;line-height:16px;">Últimas 10 facturas timbradas</div>
</body></html>
